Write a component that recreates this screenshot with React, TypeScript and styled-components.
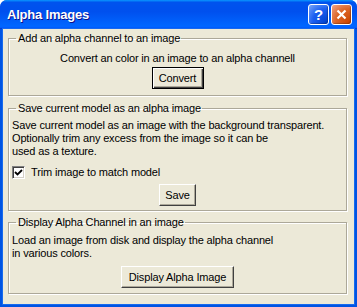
import styled, { createGlobalStyle } from 'styled-components'

const Global = createGlobalStyle`
  html, body {
    margin: 0;
    padding: 0;
    background: #ffffff;
  }
  body {
    font-family: "Liberation Sans", Arial, sans-serif;
    font-size: 11px;
    letter-spacing: -0.15px;
    color: #000;
  }
`

const Window = styled.div`
  width: 357px;
  height: 307px;
  display: flex;
  flex-direction: column;
  border-radius: 7px 7px 0 0;
  overflow: hidden;
  background: #0054e3;
`

const TitleBar = styled.div`
  height: 29px;
  flex: none;
  display: flex;
  align-items: center;
  padding: 0 5px 0 7px;
  box-sizing: border-box;
  background: linear-gradient(
    to bottom,
    #0997ff 0%,
    #0053ee 8%,
    #0050ee 40%,
    #0066ff 88%,
    #0066ff 93%,
    #005bff 95%,
    #003dd7 96%,
    #003dd7 100%
  );
`

const Title = styled.div`
  flex: 1;
  color: #fff;
  font-weight: bold;
  font-size: 13px;
  letter-spacing: -0.2px;
  text-shadow: 1px 1px 0 #0f1089;
`

const Controls = styled.div`
  display: flex;
  gap: 2px;
`

const CtlButton = styled.div<{ $close?: boolean }>`
  width: 21px;
  height: 21px;
  box-sizing: border-box;
  border: 1px solid #fff;
  border-radius: 3px;
  display: flex;
  align-items: center;
  justify-content: center;
  color: #fff;
  font-weight: bold;
  font-size: 15px;
  background: ${(p) =>
    p.$close
      ? 'radial-gradient(circle at 90% 90%, #cc4600 0%, #dc6527 55%, #f0a58a 100%)'
      : 'radial-gradient(circle at 90% 90%, #0043cf 0%, #1b5ff1 55%, #7aa7f8 100%)'};
  box-shadow: inset -1px -1px 1px rgba(0, 0, 0, 0.25);
`

const Body = styled.div`
  flex: 1;
  margin: 0 3px 3px 3px;
  background: #ece9d8;
  padding: 3px 7px 0 5px;
  box-shadow: 0 0 0 1px #166aee;
`

const Group = styled.fieldset<{ $h: number; $top?: number }>`
  margin: ${(p) => p.$top ?? 0}px 0 0 0;
  height: ${(p) => p.$h}px;
  box-sizing: border-box;
  padding: 0 3px;
  border: 1px solid #aca899;
  box-shadow: inset 1px 1px 0 #fff, 1px 1px 0 #fff;
  min-width: 0;
`

const Legend = styled.legend`
  padding: 0 1px 0 2px;
  margin-left: 4px;
  line-height: 13px;
`

const Text = styled.div<{ $center?: boolean; $top?: number }>`
  line-height: 13px;
  margin-top: ${(p) => p.$top ?? 0}px;
  text-align: ${(p) => (p.$center ? 'center' : 'left')};
  white-space: nowrap;
`

const Row = styled.div<{ $top?: number }>`
  display: flex;
  justify-content: center;
  margin-top: ${(p) => p.$top ?? 0}px;
`

const Button = styled.div<{ $w: number; $def?: boolean }>`
  width: ${(p) => p.$w}px;
  height: 22px;
  box-sizing: border-box;
  display: flex;
  align-items: center;
  justify-content: center;
  background: #ece9d8;
  border: 1px solid;
  border-color: ${(p) => (p.$def ? '#000' : '#fff #404040 #404040 #fff')};
  box-shadow: ${(p) =>
    p.$def
      ? 'inset 1px 1px 0 #fff, inset -1px -1px 0 #404040, inset -2px -2px 0 #aca899'
      : 'inset -1px -1px 0 #aca899'};
  font-size: 11px;
`

const CheckRow = styled.label`
  display: flex;
  align-items: center;
  gap: 6px;
  margin-top: 8px;
  line-height: 13px;
`

const Box = styled.span`
  width: 13px;
  height: 13px;
  box-sizing: border-box;
  background: #fff;
  border: 1px solid;
  border-color: #808080 #fff #fff #808080;
  box-shadow: inset 1px 1px 0 #404040, inset -1px -1px 0 #d4d0c8;
  display: flex;
  align-items: center;
  justify-content: center;
  svg {
    width: 9px;
    height: 9px;
  }
`

export default function App() {
  return (
    <Window>
      <Global />
      <TitleBar>
        <Title>Alpha Images</Title>
        <Controls>
          <CtlButton>?</CtlButton>
          <CtlButton $close>
            <svg width="11" height="11" viewBox="0 0 11 11">
              <path d="M1.5 1.5 L9.5 9.5 M9.5 1.5 L1.5 9.5" stroke="#fff" strokeWidth="2.2" />
            </svg>
          </CtlButton>
        </Controls>
      </TitleBar>
      <Body>
        <Group $h={64}>
          <Legend>Add an alpha channel to an image</Legend>
          <Text $center $top={7}>Convert an color in an image to an alpha channell</Text>
          <Row $top={2}>
            <Button $w={52} $def>Convert</Button>
          </Row>
        </Group>
        <Group $h={109} $top={6}>
          <Legend>Save current model as an alpha image</Legend>
          <Text $top={4}>Save current model as an image with the background transparent.</Text>
          <Text>Optionally trim any excess from the image so it can be</Text>
          <Text>used as a texture.</Text>
          <CheckRow>
            <Box>
              <svg viewBox="0 0 9 9">
                <path d="M1 4 L3.5 6.5 L8 2" stroke="#000" strokeWidth="1.8" fill="none" />
              </svg>
            </Box>
            Trim image to match model
          </CheckRow>
          <Row $top={5}>
            <Button $w={37}>Save</Button>
          </Row>
        </Group>
        <Group $h={78} $top={5}>
          <Legend>Display Alpha Channel in an image</Legend>
          <Text $top={5}>Load an image from disk and display the alpha channel</Text>
          <Text>in various colors.</Text>
          <Row $top={6}>
            <Button $w={113}>Display Alpha Image</Button>
          </Row>
        </Group>
      </Body>
    </Window>
  )
}
